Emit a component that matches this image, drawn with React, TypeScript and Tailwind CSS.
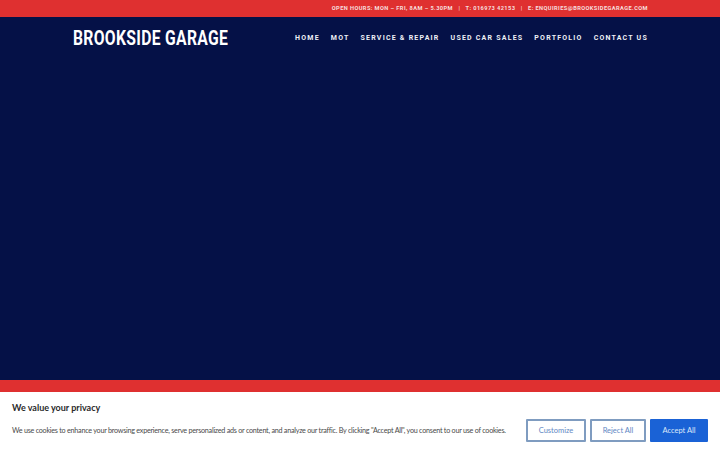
export default function App() {
  const links = ['HOME', 'MOT', 'SERVICE & REPAIR', 'USED CAR SALES', 'PORTFOLIO', 'CONTACT US'];

  return (
    <div className="relative h-[450px] w-[720px] overflow-hidden bg-[#051147] font-['Roboto',sans-serif]">
      {/* Top bar */}
      <div className="flex h-[17px] items-center justify-end bg-[#df3030] pr-[72px] text-[5.7px] font-bold tracking-[0.4px] text-[#f6dede]">
        <span className="whitespace-pre">OPEN HOURS: MON – FRI, 8AM – 5.30PM   |   T: 016973 42153   |   E: ENQUIRIES@BROOKSIDEGARAGE.COM</span>
      </div>

      {/* Header */}
      <header className="flex h-[42px] items-center justify-between pl-[73px] pr-[72px]">
        <div className="w-[155px] origin-left scale-x-[0.785] whitespace-nowrap text-[20px] font-bold tracking-[0.4px] text-white">BROOKSIDE GARAGE</div>
        <nav className="flex gap-[11px] text-[7px] font-bold tracking-[1.22px] text-[#eef0f6]">
          {links.map(link => (
            <a key={link} className="whitespace-nowrap">{link}</a>
          ))}
        </nav>
      </header>

      {/* Hero */}
      <div className="h-[321px]" />
      <div className="h-[12px] bg-[#df3030]" />

      {/* Cookie banner */}
      <div className="absolute bottom-0 left-0 flex h-[58px] w-full flex-col bg-white px-[12px] pt-[9px] font-['Lato',sans-serif] text-[#333]">
        <h2 className="text-[9px] font-bold leading-[13px] text-[#2a2a2a]">We value your privacy</h2>
        <div className="mt-[5px] flex items-start justify-between">
          <p className="mt-[6px] whitespace-nowrap text-[7.2px] leading-[11px] tracking-[-0.25px] text-[#4a4a4a]">
            We use cookies to enhance your browsing experience, serve personalized ads or content, and analyze our traffic. By clicking "Accept All", you consent to our use of cookies.
          </p>
          <div className="flex gap-[4px] text-[7.5px]">
            <button className="h-[23px] w-[60px] rounded-[1px] border-2 border-[#7f9cc0] text-[#5f88c4]">Customize</button>
            <button className="h-[23px] w-[56px] rounded-[1px] border-2 border-[#7f9cc0] text-[#5f88c4]">Reject All</button>
            <button className="h-[23px] w-[58px] rounded-[1px] bg-[#1a62d6] text-[#dce8fa]">Accept All</button>
          </div>
        </div>
      </div>
    </div>
  );
}
